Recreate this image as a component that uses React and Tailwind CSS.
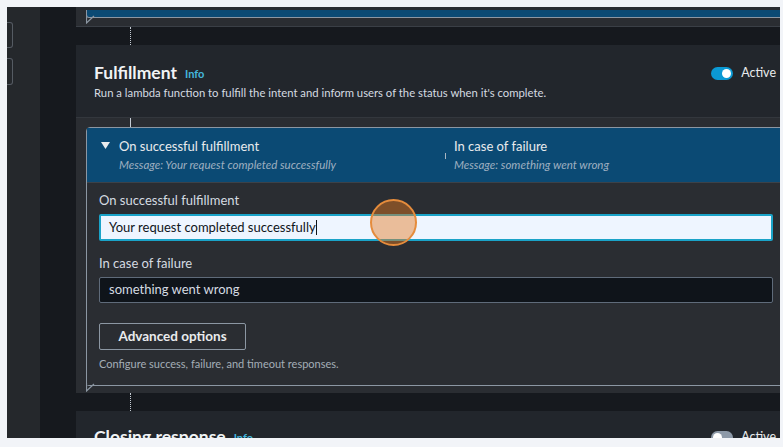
const Toggle = ({ on }) => (
    <div className={`relative w-[22px] h-[13px] rounded-full ${on ? "bg-[#0b99d4]" : "bg-[#8d99a8]"}`}>
        <div className={`absolute top-[2px] w-[9px] h-[9px] rounded-full bg-white ${on ? "right-[2px]" : "left-[2px]"}`}></div>
    </div>
);

const Connector = ({ dotted, h, ml = "ml-[54px]" }) => (
    <div className={`${ml} w-0 ${h} border-l ${dotted ? "border-dotted border-[#c5ccd4]" : "border-[#c5ccd4]"}`}></div>
);

const Tail = () => (
    <svg className="absolute left-[-1px] bottom-[-7px]" width="10" height="9" viewBox="0 0 10 9">
        <path d="M0.5 0 L0.5 8 L8 1" fill="none" stroke="#8c97a3" strokeWidth="1.2" />
    </svg>
);

const Caret = () => (
    <svg className="mt-[5px] mr-[9px]" width="9" height="8" viewBox="0 0 9 8">
        <path d="M0 0 H9 L4.5 7 Z" fill="#e9ebed" />
    </svg>
);

export default function App() {
    return (
        <div className="w-[783px] h-[447px] bg-[#f2f4f8] pt-[7px] pl-[7px] pr-[3px] pb-[9px] overflow-hidden" style={{ fontFamily: "Lato, 'Open Sans', sans-serif" }}>
            <div className="flex h-full bg-[#16191e] overflow-hidden">

                {/* left nav strip */}
                <div className="w-[33px] bg-[#25282c] pt-[15px] flex flex-col gap-[10px]">
                    <div className="w-[6px] h-[26px] border border-l-0 border-[#555b63] rounded-r-[3px]"></div>
                    <div className="w-[6px] h-[27px] border border-l-0 border-[#555b63] rounded-r-[3px]"></div>
                </div>

                <div className="w-[36px] bg-[#16191e]"></div>

                {/* main */}
                <div className="flex-1 min-w-0 relative">

                    {/* previous block tail */}
                    <div className="h-[20px] bg-[#2a2d32] pl-[10px] pt-[3px] border-b border-[#3a3f46]">
                        <div className="relative h-[8px] bg-[#0b4a74] border-x border-b border-[#8c97a3] mr-[-4px] rounded-bl-[3px]">
                            <Tail />
                        </div>
                    </div>

                    <Connector dotted h="h-[18px]" />

                    {/* Fulfillment card */}
                    <div className="bg-[#22262c]">
                        <div className="pl-[18px] pr-[4px] pt-[16px] pb-[16px] flex">
                            <div className="flex-1">
                                <div className="flex gap-[8px] h-[24px] items-center">
                                    <span className="text-[17.5px] font-bold text-[#f1f3f5] leading-[24px]">Fulfillment</span>
                                    <span className="text-[11px] font-bold text-[#44b7dd] mt-[3px]">Info</span>
                                </div>
                                <p className="text-[11.3px] leading-[16px] text-[#d5dbe1]">
                                    Run a lambda function to fulfill the intent and inform users of the status when it's complete.
                                </p>
                            </div>
                            <div className="flex shrink-0 items-center gap-[8px] h-[24px]">
                                <Toggle on />
                                <span className="text-[12.5px] whitespace-nowrap text-[#e9ebed]">Active</span>
                            </div>
                        </div>

                        <div className="bg-[#2a2d32] border-t border-[#33373d] pl-[10px] pb-[7px]">
                            <Connector h="h-[9px]" ml="ml-[44px]" />

                            <div className="relative border border-[#8c97a3] rounded-tl-[4px] rounded-bl-[3px] mr-[-6px]">
                                {/* item header */}
                                <div className="bg-[#0b4a74] h-[54px] flex pt-[9px]">
                                    <div className="w-[358px] pl-[14px] flex">
                                        <Caret />
                                        <div>
                                            <div className="text-[13px] leading-[18px] text-[#e9ebed]">On successful fulfillment</div>
                                            <div className="text-[11.5px] leading-[20px] italic text-[#9fb0c1]">Message: Your request completed successfully</div>
                                        </div>
                                    </div>
                                    <div className="w-px h-[6px] bg-[#aab6c2] mt-[16px] mr-[8px]"></div>
                                    <div>
                                        <div className="text-[13px] leading-[18px] text-[#e9ebed]">In case of failure</div>
                                        <div className="text-[11.5px] leading-[20px] italic text-[#9fb0c1]">Message: something went wrong</div>
                                    </div>
                                </div>

                                {/* item body */}
                                <div className="bg-[#2a2d32] pl-[12px] pr-[12px] pt-[8px] pb-[13px] border-t border-[#3c4249]">
                                    <div className="text-[13px] leading-[18px] text-[#d5dbe1]">On successful fulfillment</div>
                                    <div className="relative mt-[5px] h-[27px] bg-[#eef5ff] border-2 border-[#1aa3c8] rounded-[2px] flex items-center pl-[8px] text-[13px] text-[#0f141a]">
                                        Your request completed successfully<span className="w-px h-[15px] bg-[#0f141a]"></span>
                                    </div>
                                    <div className="mt-[13px] text-[13px] leading-[18px] text-[#d5dbe1]">In case of failure</div>
                                    <div className="mt-[5px] h-[26px] bg-[#0f141a] border border-[#5f6b7a] rounded-[2px] flex items-center pl-[9px] text-[13px] text-[#d5dbe1]">
                                        something went wrong
                                    </div>
                                    <button className="mt-[20px] h-[27px] w-[147px] border border-[#8c97a3] rounded-[2px] text-[13.5px] font-bold text-[#e9ebed]">
                                        Advanced options
                                    </button>
                                    <div className="mt-[6px] text-[11px] leading-[16px] text-[#a4adb7]">Configure success, failure, and timeout responses.</div>
                                </div>
                                <Tail />
                            </div>
                        </div>
                    </div>

                    <Connector dotted h="h-[18px]" />

                    {/* Closing response card */}
                    <div className="bg-[#22262c] h-[60px] pl-[18px] pr-[4px] pt-[14px] flex">
                        <div className="flex-1 flex gap-[8px] h-[24px] items-center">
                            <span className="text-[17.5px] font-bold text-[#f1f3f5] leading-[24px]">Closing response</span>
                            <span className="text-[11px] font-bold text-[#44b7dd] mt-[3px]">Info</span>
                        </div>
                        <div className="flex shrink-0 items-center gap-[8px] h-[24px]">
                            <Toggle />
                            <span className="text-[12.5px] whitespace-nowrap text-[#e9ebed]">Active</span>
                        </div>
                    </div>

                    {/* click indicator */}
                    <div className="absolute left-[294px] top-[192px] w-[47px] h-[47px] rounded-full border-2 border-[#e58c3c] bg-[#e57a1e]/45"></div>
                </div>
            </div>
        </div>
    );
}
